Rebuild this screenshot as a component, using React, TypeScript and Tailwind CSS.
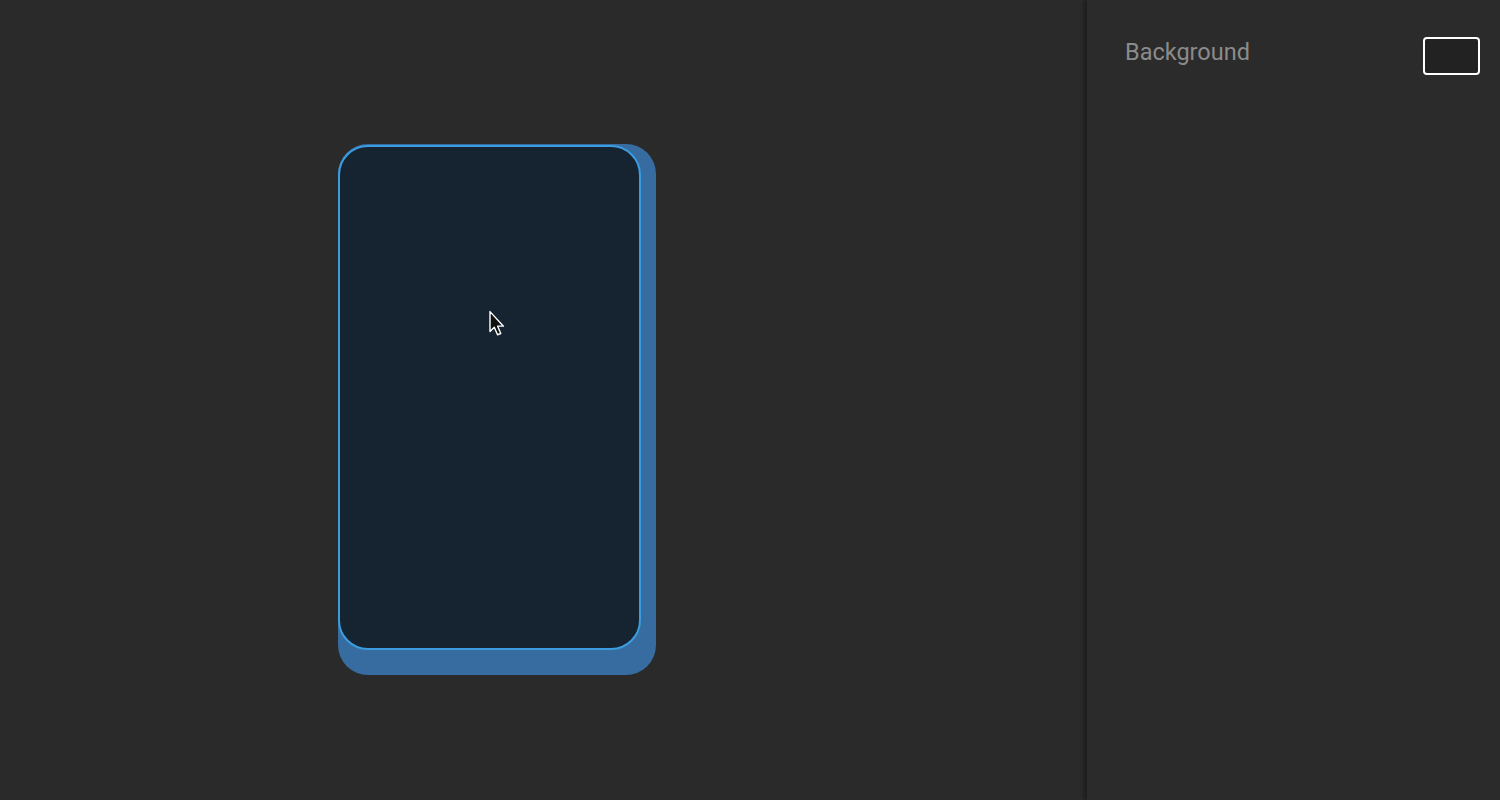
import React from "react";

export default function App() {
  return (
    <div className="flex h-[800px] w-[1500px] bg-[#2a2a2a] overflow-hidden" style={{ fontFamily: "Roboto, 'Liberation Sans', sans-serif" }}>
      <div className="flex-1 pl-[338px] pt-[144px]">
        <div className="relative w-[318px] h-[531px] rounded-[30px] bg-[#366ca0]">
          <div className="absolute left-0 top-[1px] w-[303px] h-[505px] rounded-[30px] border-[2.5px] border-[#3b9de0] bg-[#162331]" />
          <svg className="absolute left-[150px] top-[166px]" width="18" height="28" viewBox="0 0 16 26">
            <path d="M1.5 1.5 L1.5 20 L5.5 16 L8.5 23 L11.5 21.8 L8.6 15 L14 15 Z" fill="#111" stroke="#fff" strokeWidth="1.3" strokeLinejoin="round" />
          </svg>
        </div>
      </div>
      <div className="relative w-[413px] bg-[#2b2b2b] shadow-[-3px_0_4px_rgba(0,0,0,0.35)] flex items-start justify-between pl-[38px] pr-[20px] pt-[37px]">
        <div className="text-[23.5px] leading-[30px] text-[#8b8b8b]">Background</div>
        <div className="w-[57px] h-[38px] rounded-[4px] border-2 border-white bg-[#222222]" />
      </div>
    </div>
  );
}
